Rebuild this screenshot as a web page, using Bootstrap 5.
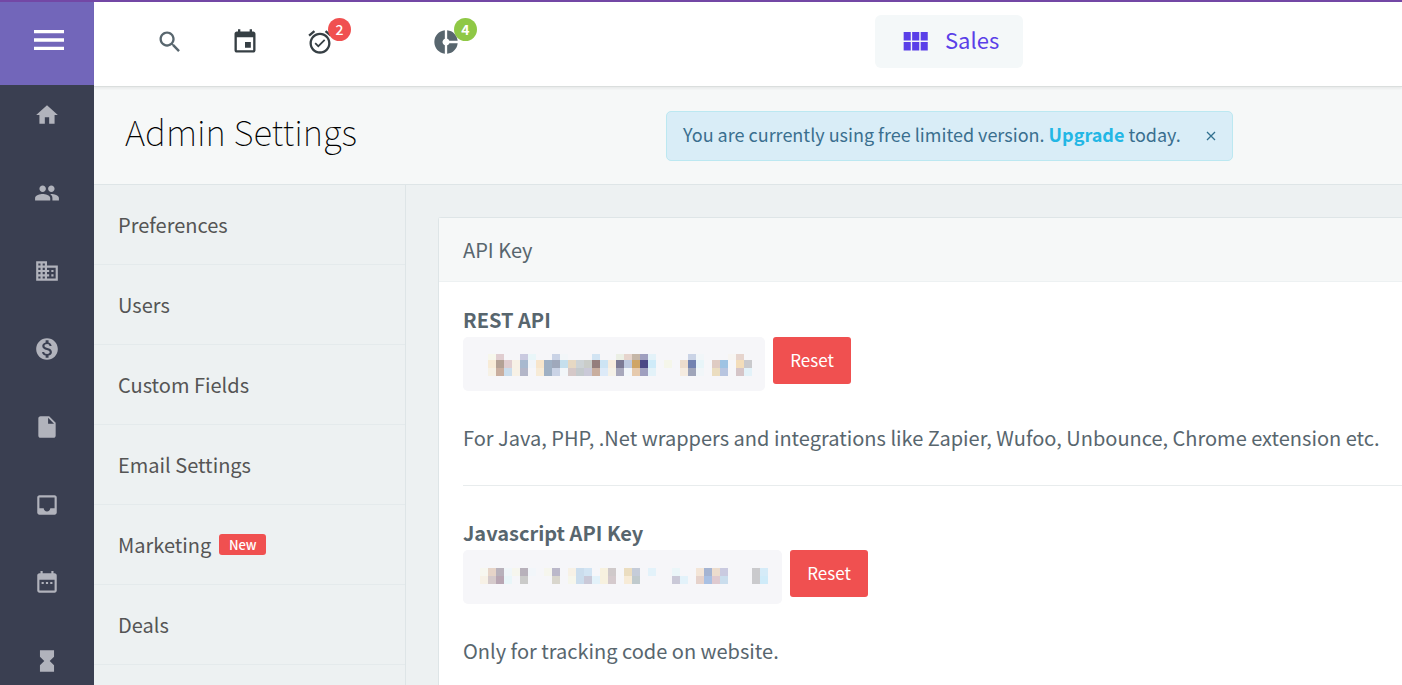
<!DOCTYPE html>
<html lang="en">
<head>
<meta charset="utf-8">
<meta name="viewport" content="width=device-width, initial-scale=1">
<title>Admin Settings</title>
<link href="https://cdn.jsdelivr.net/npm/bootstrap@5.3.0/dist/css/bootstrap.min.css" rel="stylesheet">
<style>
  body { font-family: "Noto Sans CJK SC", "Open Sans", sans-serif; font-size: 20px; line-height: 28px; color: #58666e; background: #edf1f2; border-top: 2px solid #7347a5; overflow-x: hidden; }
  svg { fill: currentColor; display: block; }
  .side-rail { width: 94px; background: #3a3f51; color: #b1b3bc; }
  .menu-toggle { height: 83px; background: #7266ba; color: #fff; }
  .rail-link { height: 78px; padding-top: 17px; color: inherit; }
  .top-bar { height: 85px; background: #fff; border-bottom: 1px solid #dadedd; box-shadow: 0 2px 2px rgba(0,0,0,.05); padding-left: 62px; padding-bottom: 5px; position: relative; }
  .tool-btn { color: #58666e; margin-right: 47px; position: relative; }
  .tool-dark { color: #363f44; }
  .tool-wide { margin-right: 98px; }
  .tool-btn .count-badge { position: absolute; left: 22px; top: -10px; width: 23px; height: 23px; line-height: 22px; font-size: 14px; font-weight: 500; padding: 0; }
  .bg-alert { background: #f05050; }
  .bg-ok { background: #8fc846; }
  .sales-btn { width: 148px; height: 53px; margin-left: 415px; background: #f4f8f9; color: #5a3fe8; font-size: 22px; border-radius: 6px; padding-left: 23px; gap: 13px; }
  .page-head { height: 98px; background: #f6f8f8; border-bottom: 1px solid #dee5e7; padding-left: 31px; }
  .page-title { width: 541px; font-size: 35px; line-height: 44px; font-weight: 100; color: #000; padding-bottom: 10px; }
  .notice { height: 50px; font-size: 18px; background: #d9edf7; border: 1px solid #bce8f1; color: #3a6f8f; border-radius: 5px; padding: 0 12px 0 16px; margin-top: 1px; }
  .notice a { color: #23b7e5; }
  .notice-close { color: #31708f; padding: 4px; margin-left: 21px; }
  .settings-menu { width: 312px; border-right: 1px solid #dee5e7; }
  .settings-menu a { height: 80px; padding-left: 24px; color: #555; border-bottom: 1px solid #e4eaec; }
  .new-tag { width: 47px; height: 21px; line-height: 21px; padding: 0; font-size: 13px; font-weight: 500; border-radius: 3px; }
  .panel { background: #fff; border: 1px solid #dee5e7; border-right: 0; border-bottom: 0; border-radius: 3px 0 0 0; }
  .panel-title { height: 64px; background: #f6f8f8; border-bottom: 1px solid #edf1f2; font-size: 20px; }
  .key-label { font-size: 20px; line-height: 28px; padding-bottom: 3px; }
  .key-field { height: 54px; background: #f6f6f9; border-radius: 5px; }
  .key-rest { width: 302px; padding: 17px 0 0 25px; }
  .key-js { width: 319px; padding: 18px 0 0 17px; }
  .reset-btn { width: 78px; height: 47px; background: #f05050; color: #fff; font-size: 17px; border-radius: 3px; padding: 0 0 2px; }
  .key-note { margin-top: 33px; }
  .key-rule { margin: 33px 0; border-top: 1px solid #e8eced; opacity: 1; }
</style>
</head>
<body class="d-flex min-vh-100">
<nav class="side-rail flex-shrink-0" aria-label="Main">
  <button class="menu-toggle btn rounded-0 border-0 w-100 p-0 pb-1 d-flex align-items-center justify-content-center" aria-label="Menu"><svg class="ms-1 mb-1" width="40" height="40" viewBox="0 0 24 24"><path d="M3 18h18v-2H3v2zm0-5h18v-2H3v2zm0-7v2h18V6H3z"/></svg></button>
  <a href="#" class="rail-link d-flex justify-content-center" aria-label="Home"><svg width="26" height="26" viewBox="0 0 24 24"><path d="M10 20v-6h4v6h5v-8h3L12 3 2 12h3v8z"/></svg></a>
  <a href="#" class="rail-link d-flex justify-content-center" aria-label="Contacts"><svg width="26" height="26" viewBox="0 0 24 24"><path d="M16 11c1.66 0 2.99-1.34 2.99-3S17.66 5 16 5s-3 1.34-3 3 1.34 3 3 3zm-8 0c1.66 0 2.99-1.34 2.99-3S9.66 5 8 5 5 6.34 5 8s1.34 3 3 3zm0 2c-2.33 0-7 1.17-7 3.5V19h14v-2.500C15 14.170 10.330 13 8 13zm8 0c-.29 0-.62.02-.97.05 1.160.84 1.970 1.970 1.970 3.450V19h6v-2.500c0-2.330-4.670-3.500-7-3.500z"/></svg></a>
  <a href="#" class="rail-link d-flex justify-content-center" aria-label="Companies"><svg width="26" height="26" viewBox="0 0 24 24"><path d="M12 7V3H2v18h20V7H12zM6 19H4v-2h2v2zm0-4H4v-2h2v2zm0-4H4V9h2v2zm0-4H4V5h2v2zm4 12H8v-2h2v2zm0-4H8v-2h2v2zm0-4H8V9h2v2zm0-4H8V5h2v2zm10 12h-8v-2h2v-2h-2v-2h2v-2h-2V9h8v10zm-2-8h-2v2h2v-2zm0 4h-2v2h2v-2z"/></svg></a>
  <a href="#" class="rail-link d-flex justify-content-center" aria-label="Deals"><svg width="26" height="26" viewBox="0 0 24 24"><path d="M12 2C6.480 2 2 6.480 2 12s4.480 10 10 10 10-4.480 10-10S17.520 2 12 2zm1.410 16.090V20h-2.670v-1.930c-1.710-.36-3.160-1.460-3.270-3.400h1.960c.1 1.050.82 1.870 2.650 1.870 1.960 0 2.400-.98 2.400-1.590 0-.83-.44-1.610-2.670-2.140-2.480-.6-4.180-1.620-4.180-3.670 0-1.720 1.390-2.840 3.110-3.210V4h2.670v1.950c1.860.45 2.790 1.860 2.850 3.390H14.300c-.05-1.110-.64-1.870-2.220-1.870-1.500 0-2.400.68-2.400 1.640 0 .84.65 1.390 2.670 1.910s4.180 1.390 4.180 3.910c-.01 1.830-1.380 2.830-3.120 3.160z"/></svg></a>
  <a href="#" class="rail-link d-flex justify-content-center" aria-label="Documents"><svg width="26" height="26" viewBox="0 0 24 24"><path fill-rule="evenodd" d="M6 2c-1.100 0-2 .9-2 2v16c0 1.100.9 2 2 2h12c1.100 0 2-.9 2-2V8l-6-6H6zm7 7V3.500L18.500 9H13z"/></svg></a>
  <a href="#" class="rail-link d-flex justify-content-center" aria-label="Inbox"><svg width="26" height="26" viewBox="0 0 24 24"><path d="M19 3H5c-1.100 0-2 .9-2 2v14c0 1.100.9 2 2 2h14c1.100 0 2-.9 2-2V5c0-1.100-.9-2-2-2zm0 12h-4c0 1.660-1.350 3-3 3s-3-1.340-3-3H5V5h14v10z"/></svg></a>
  <a href="#" class="rail-link d-flex justify-content-center" aria-label="Calendar"><svg width="26" height="26" viewBox="0 0 24 24"><path d="M9 11H7v2h2v-2zm4 0h-2v2h2v-2zm4 0h-2v2h2v-2zm2-8h-1V1h-2v2H8V1H6v2H5c-1.110 0-2 .9-2 2v14c0 1.100.89 2 2 2h14c1.100 0 2-.9 2-2V5c0-1.100-.9-2-2-2zm0 16H5V9h14v10z"/></svg></a>
  <a href="#" class="rail-link h-auto d-flex justify-content-center" aria-label="Activity"><svg width="26" height="26" viewBox="0 0 24 24"><path d="M5.500 2v6h.01l-.01.010L9.500 12l-4 4 .01.010H5.500V22h13v-5.990h-.01l.01-.01-4-4 4-3.990-.01-.01h.01V2z"/></svg></a>
</nav>
<div class="flex-grow-1 d-flex flex-column">
  <header class="top-bar d-flex align-items-center flex-shrink-0">
    <button class="tool-btn btn border-0 p-0" aria-label="Search"><svg width="28" height="28" viewBox="0 0 24 24"><path d="M15.500 14h-.79l-.28-.27C15.410 12.590 16 11.110 16 9.500 16 5.910 13.090 3 9.500 3S3 5.910 3 9.500 5.910 16 9.500 16c1.610 0 3.090-.59 4.230-1.570l.27.28v.79l5 4.990L20.490 19l-4.990-5zm-6 0C7.010 14 5 11.990 5 9.500S7.010 5 9.500 5 14 7.010 14 9.500 11.990 14 9.500 14z"/></svg></button>
    <button class="tool-btn tool-dark btn border-0 p-0" aria-label="Events"><svg width="28" height="28" viewBox="0 0 24 24"><path d="M17 12h-5v5h5v-5zM16 1v2H8V1H6v2H5c-1.110 0-1.990.9-1.990 2L3 19c0 1.100.89 2 2 2h14c1.100 0 2-.9 2-2V5c0-1.100-.9-2-2-2h-1V1h-2zm3 18H5V8h14v11z"/></svg></button>
    <button class="tool-btn tool-wide tool-dark btn border-0 p-0" aria-label="Reminders"><svg width="28" height="28" viewBox="0 0 24 24"><path d="M22 5.720l-4.600-3.860-1.290 1.530 4.600 3.860L22 5.720zM7.880 3.390L6.600 1.860 2 5.710l1.290 1.530 4.590-3.850zM12 4c-4.970 0-9 4.030-9 9s4.020 9 9 9c4.970 0 9-4.030 9-9s-4.030-9-9-9zm0 16c-3.870 0-7-3.130-7-7s3.130-7 7-7 7 3.130 7 7-3.130 7-7 7zm-1.460-5.470L8.410 12.400l-1.060 1.060 3.180 3.180 6-6-1.060-1.060-4.930 4.950z"/></svg><span class="count-badge badge rounded-circle bg-alert">2</span></button>
    <button class="tool-btn btn border-0 p-0 m-0" aria-label="Reports"><svg width="28" height="28" viewBox="0 0 24 24"><path d="M11 9.160V2c-5 .5-9 4.790-9 10s4 9.500 9 10v-7.160c-1-.41-2-1.520-2-2.840s1-2.430 2-2.840zM14.860 11H22c-.48-4.750-4-8.530-9-9v7.160c1 .3 1.520.98 1.860 1.840zM13 14.840V22c5-.47 8.520-4.250 9-9h-7.140c-.34.86-.86 1.540-1.860 1.840z"/></svg><span class="count-badge badge rounded-circle bg-ok fw-bold">4</span></button>
    <button class="sales-btn btn border-0 py-0 d-flex align-items-center flex-shrink-0"><svg width="34" height="34" viewBox="0 0 24 24"><path d="M4 11h5V5H4v6zm0 7h5v-6H4v6zm6 0h5v-6h-5v6zm6 0h5v-6h-5v6zm-6-7h5V5h-5v6zm6-6v6h5V5h-5z"/></svg><span class="pb-1">Sales</span></button>
  </header>
  <div class="page-head d-flex align-items-center flex-shrink-0">
    <h1 class="page-title m-0">Admin Settings</h1>
    <div class="notice d-flex align-items-center text-nowrap" role="alert"><span class="pb-1">You are currently using free limited version. <a href="#" class="fw-bold text-decoration-none">Upgrade</a> today.</span>
      <button class="notice-close btn border-0" aria-label="Close"><svg width="10" height="10" viewBox="0 0 10 10"><path d="M1 1l8 8M9 1L1 9" stroke="currentColor" stroke-width="1.300"/></svg></button></div>
  </div>
  <div class="d-flex flex-grow-1">
    <nav class="settings-menu flex-shrink-0" aria-label="Settings">
      <a href="#" class="d-flex align-items-center text-decoration-none">Preferences</a>
      <a href="#" class="d-flex align-items-center text-decoration-none">Users</a>
      <a href="#" class="d-flex align-items-center text-decoration-none">Custom Fields</a>
      <a href="#" class="d-flex align-items-center text-decoration-none">Email Settings</a>
      <a href="#" class="d-flex align-items-center text-decoration-none gap-2">Marketing <span class="new-tag badge bg-alert">New</span></a>
      <a href="#" class="d-flex align-items-center text-decoration-none">Deals</a>
    </nav>
    <main class="flex-grow-1 d-flex flex-column ps-4 pt-4">
      <section class="panel flex-grow-1 ms-2 mt-2">
        <h2 class="panel-title d-flex align-items-center m-0 px-4 fw-normal">API Key</h2>
        <div class="ps-4 pt-4">
          <h3 class="key-label m-0 fw-bold">REST API</h3>
          <div class="d-flex gap-2 align-items-start">
            <div class="key-field key-rest"><svg id="restKey" width="264" height="22" shape-rendering="crispEdges" role="img" aria-label="Hidden REST key"></svg></div>
            <button class="reset-btn btn border-0">Reset</button>
          </div>
          <p class="key-note mb-0">For Java, PHP, .Net wrappers and integrations like Zapier, Wufoo, Unbounce, Chrome extension etc.</p>
          <hr class="key-rule">
          <h3 class="key-label m-0 fw-bold">Javascript API Key</h3>
          <div class="d-flex gap-2 align-items-start">
            <div class="key-field key-js"><svg id="jsKey" width="288" height="16" shape-rendering="crispEdges" role="img" aria-label="Hidden Javascript key"></svg></div>
            <button class="reset-btn btn border-0">Reset</button>
          </div>
          <p class="key-note mb-0">Only for tracking code on website.</p>
        </div>
      </section>
    </main>
  </div>
</div>
<script src="https://cdn.jsdelivr.net/npm/bootstrap@5.3.0/dist/js/bootstrap.bundle.min.js"></script>
<script>
  // Censored keys: each row lists 8px cells, "-" leaves a cell empty
  function mosaic(id, rows) {
    let y = 0, out = '';
    rows.forEach(([h, cells]) => {
      cells.split(' ').forEach((c, k) => {
        if (c !== '-') out += `<rect x="${k * 8}" y="${y}" width="8" height="${h}" fill="#${c}"/>`;
      });
      y += h;
    });
    document.getElementById(id).innerHTML = out;
  }
  mosaic('restKey', [
    [6, 'f7f7ec e0cdd0 - - cacae0 e9f6f9 - - cad3e6 f2f6f9 - - - d2e4f3 - - ebefe5 e6d4cd c5b6a8 9f9fbf e3f2f9 - - - - cad3e6 f1f6f9 - - - f7f5f2 e6d4cd'],
    [8, 'f7ebd7 b3a195 e0cdd0 f7f1e6 a8b9cf f1f5f9 f7e5cb 9fb0c4 9fa8bb c5dfed e6d8c3 cdd3d6 cacdc9 957e7c cde4f4 f7ecdf 7c7a95 bfcae0 cfa566 4a4886 cfebf9 - f5f6ea - ecdccd 7283b1 e8f5f9 - dfcbc3 9fc3e3 - f3ddba cacacd'],
    [8, 'f6f1e6 c9ae9f cadded f7f1e6 b3b6c8 - f7ebd7 9fb0c4 cad3e6 f2f6f9 d5c8c8 c4cacd cac9d8 c9ae9f ddeaf8 f5f1e8 a8a8bc f2f6fa e6caae 9f9fbf e3f2f9 - - - f5ebe0 9fa5ba f1f6f9 - ebddc0 b8c5e0 - d5c5c8 e3f2f9']
  ]);
  mosaic('jsKey', [
    [8, 'f7f7f0 e6d4c8 b8b1bb f0f6f9 f6f6ee b8b1bb f2f6fa - f6f6ee bbb8ca - f7f1e6 cbdded d2e4f3 - f7f1df cfc9ca - ebddc0 c5ccd9 - e3f2fa - - ebf6f9 - - f3e5d7 a5b4d2 ecdccd cacae0 - - - cacacd d5ebf8'],
    [8, 'f7f1e6 d5cacb b8a6b3 e9f6f9 - cacac9 - - - d9d6cd - f6f6ec cbdded cac9d8 e3f2fa f7f1df d5cacd - f7ebd7 c0cacd - - - - cac9d8 e3f2fa - e6d2cb a9c0e3 dfcad0 cadded - - - cacacd cfebf9']
  ]);
</script>
</body>
</html>
